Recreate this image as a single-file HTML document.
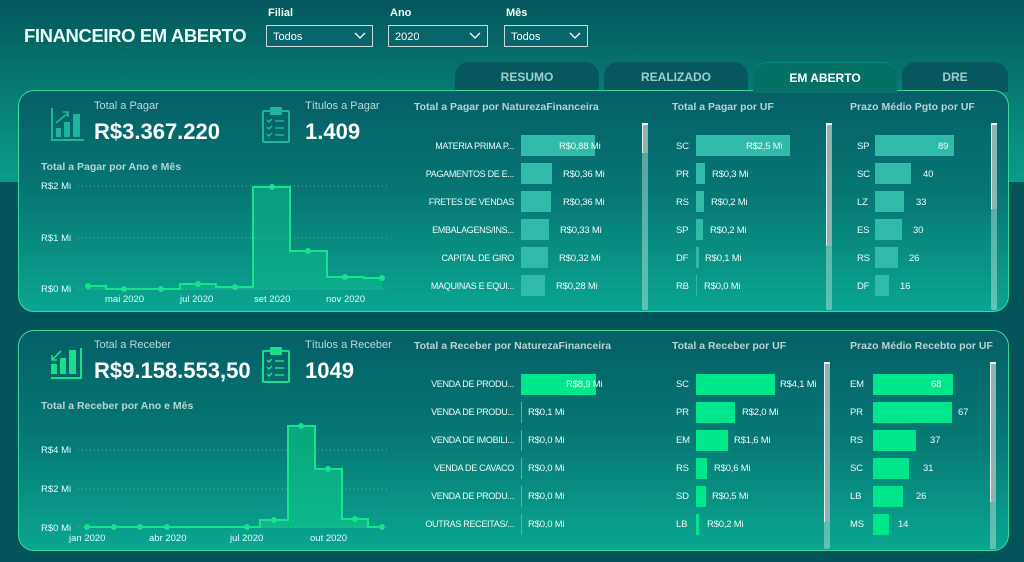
<!DOCTYPE html>
<html><head><meta charset="utf-8"><style>
*{margin:0;padding:0;box-sizing:border-box}
body{width:1024px;height:562px;overflow:hidden;position:relative;font-family:"Liberation Sans",sans-serif;background:#03555b;color:#fff}
.top{position:absolute;left:0;top:0;width:1024px;height:182px;background:linear-gradient(180deg,#04565c 0%,#078073 55%,#0a9c88 100%)}
.a{position:absolute;white-space:nowrap}
.title{left:24px;top:25px;font-size:18.5px;font-weight:bold;color:#e8fff8;letter-spacing:-0.4px}
.fl{font-size:11px;font-weight:bold;color:#f0fff8;top:7px}
.sel{top:25px;height:22px;border:1px solid #c8d8d8;background:#08656a;font-size:11px;padding:5px 6px;color:#fff}
.sel svg{position:absolute;right:6px;top:6px}
.tab{top:62px;height:30px;border-radius:14px 14px 0 0;background:#06575e;font-size:12px;font-weight:bold;color:#9ccfc8;text-align:center;padding-top:8px}
.tab.on{background:#057064;color:#fff;border-top:1px solid #0a8a7a}
.panel{position:absolute;left:18px;width:991px;border:1.5px solid #3fd69e;border-radius:16px;background:linear-gradient(180deg,#055e66 0%,#067a75 50%,#0aa790 100%)}
.lbl{font-size:11px;color:#b9d9d4}
.big{font-size:22px;font-weight:bold;color:#fff}
.ct{font-size:10.5px;font-weight:bold;color:#b5d5cf}
.rl{font-size:9px;color:#eefaf6;text-align:right;letter-spacing:-0.3px}
.v{font-size:9.5px;color:#eefaf6;letter-spacing:-0.2px}
.bar{position:absolute;height:21px}
.b1{background:#2fbba8}
.b2{background:#00e68c}
.sb{position:absolute;width:6px;background:rgba(200,230,225,.45);border-radius:1px}
.sb i{position:absolute;left:0;top:0;width:6px;background:#8fb3b0;border-top:2px solid #eee;border-left:1px solid #eee}
</style></head><body>
<div class="top"></div>
<div class="a title">FINANCEIRO EM ABERTO</div>
<div class="a fl" style="left:268px">Filial</div>
<div class="a fl" style="left:390px">Ano</div>
<div class="a fl" style="left:506px">Mês</div>
<div class="a sel" style="left:266px;width:107px">Todos<svg width="12" height="8"><path d="M1 1l5 5 5-5" stroke="#fff" fill="none" stroke-width="1.3"/></svg></div>
<div class="a sel" style="left:388px;width:100px">2020<svg width="12" height="8"><path d="M1 1l5 5 5-5" stroke="#fff" fill="none" stroke-width="1.3"/></svg></div>
<div class="a sel" style="left:504px;width:84px">Todos<svg width="12" height="8"><path d="M1 1l5 5 5-5" stroke="#fff" fill="none" stroke-width="1.3"/></svg></div>

<div class="a tab" style="left:455px;width:144px">RESUMO</div>
<div class="a tab" style="left:604px;width:144px">REALIZADO</div>
<div class="a tab" style="left:902px;width:106px">DRE</div>

<!-- Panel 1 -->
<div class="panel" style="top:90px;height:222px"></div>
<div class="a tab on" style="left:753px;width:144px;top:62px;height:31px">EM ABERTO</div>
<svg class="a" style="left:50px;top:106px" width="36" height="36"><g fill="#1fb59a" stroke="#1fb59a"><path d="M2 2v32h32" fill="none" stroke-width="2"/><rect x="6" y="22" width="5" height="9" stroke="none"/><rect x="14" y="16" width="6" height="15" stroke="none"/><rect x="23" y="8" width="7" height="23" stroke="none"/><path d="M6 17l12-10M13 6h5v5" fill="none" stroke-width="1.6"/></g></svg>
<div class="a lbl" style="left:94px;top:100px">Total a Pagar</div>
<div class="a big" style="left:94px;top:119px">R$3.367.220</div>
<svg class="a" style="left:261px;top:106px" width="30" height="38"><g stroke="#1fb59a" fill="none" stroke-width="2"><rect x="2" y="5" width="26" height="31" rx="1"/><rect x="10" y="2" width="10" height="6" fill="#1fb59a"/><path d="M6 14l2 2 3-3M6 21l2 2 3-3M6 28l2 2 3-3M14 15h9M14 22h9M14 29h9" stroke-width="1.5"/></g></svg>
<div class="a lbl" style="left:305px;top:100px">Títulos a Pagar</div>
<div class="a big" style="left:305px;top:119px">1.409</div>
<div class="a ct" style="left:41px;top:161px">Total a Pagar por Ano e Mês</div>
<svg class="a" style="left:0;top:0" width="400" height="310">
<g font-family="Liberation Sans" font-size="9.5" fill="#dff">
<text x="41" y="189">R$2 Mi</text><text x="41" y="241">R$1 Mi</text><text x="41" y="292">R$0 Mi</text>
<text x="105" y="302">mai 2020</text><text x="180" y="302">jul 2020</text><text x="254" y="302">set 2020</text><text x="326" y="302">nov 2020</text></g>
<g stroke="#7fb8b0" stroke-dasharray="1 3" stroke-width="0.8"><path d="M78 186H390M78 238H390M78 289H390"/></g>
<path d="M88 286H106V289H143V289H180V284H216V287H253V187H290V251H327V277H364V278H382V290H88Z" fill="#0fb98a" opacity=".55"/>
<path d="M88 286H106V289H143V289H180V284H216V287H253V187H290V251H327V277H364V278H382" fill="none" stroke="#16e38c" stroke-width="2"/>
<g fill="#16e38c"><circle cx="88" cy="286" r="3"/><circle cx="124" cy="289" r="3"/><circle cx="161" cy="289" r="3"/><circle cx="198" cy="284" r="3"/><circle cx="235" cy="287" r="3"/><circle cx="272" cy="187" r="3"/><circle cx="308" cy="251" r="3"/><circle cx="345" cy="277" r="3"/><circle cx="382" cy="278" r="3"/></g>
</svg>

<div class="a ct" style="left:414px;top:101px">Total a Pagar por NaturezaFinanceira</div>
<div class="a ct" style="left:672px;top:101px">Total a Pagar por UF</div>
<div class="a ct" style="left:850px;top:101px">Prazo Médio Pgto por UF</div>

<div class="a rl" style="left:400px;width:114px;top:141px">MATERIA PRIMA P...</div>
<div class="a rl" style="left:400px;width:114px;top:169px">PAGAMENTOS DE E...</div>
<div class="a rl" style="left:400px;width:114px;top:197px">FRETES DE VENDAS</div>
<div class="a rl" style="left:400px;width:114px;top:225px">EMBALAGENS/INS...</div>
<div class="a rl" style="left:400px;width:114px;top:253px">CAPITAL DE GIRO</div>
<div class="a rl" style="left:400px;width:114px;top:281px">MAQUINAS E EQUI...</div>
<div class="bar b1" style="left:521px;top:135px;width:74px"></div><div class="a v" style="left:559px;top:141px">R$0,88 Mi</div>
<div class="bar b1" style="left:521px;top:163px;width:31px"></div><div class="a v" style="left:563px;top:169px">R$0,36 Mi</div>
<div class="bar b1" style="left:521px;top:191px;width:30px"></div><div class="a v" style="left:563px;top:197px">R$0,36 Mi</div>
<div class="bar b1" style="left:521px;top:219px;width:28px"></div><div class="a v" style="left:560px;top:225px">R$0,33 Mi</div>
<div class="bar b1" style="left:521px;top:247px;width:27px"></div><div class="a v" style="left:559px;top:253px">R$0,32 Mi</div>
<div class="bar b1" style="left:521px;top:275px;width:24px"></div><div class="a v" style="left:556px;top:281px">R$0,28 Mi</div>
<div class="sb" style="left:642px;top:123px;height:187px"><i style="height:30px"></i></div>

<div class="a v" style="left:676px;top:141px">SC</div><div class="bar b1" style="left:696px;top:135px;width:94px"></div><div class="a v" style="left:746px;top:141px">R$2,5 Mi</div>
<div class="a v" style="left:676px;top:169px">PR</div><div class="bar b1" style="left:696px;top:163px;width:9px"></div><div class="a v" style="left:712px;top:169px">R$0,3 Mi</div>
<div class="a v" style="left:676px;top:197px">RS</div><div class="bar b1" style="left:696px;top:191px;width:8px"></div><div class="a v" style="left:711px;top:197px">R$0,2 Mi</div>
<div class="a v" style="left:676px;top:225px">SP</div><div class="bar b1" style="left:696px;top:219px;width:7px"></div><div class="a v" style="left:710px;top:225px">R$0,2 Mi</div>
<div class="a v" style="left:676px;top:253px">DF</div><div class="bar b1" style="left:696px;top:247px;width:3px"></div><div class="a v" style="left:705px;top:253px">R$0,1 Mi</div>
<div class="a v" style="left:676px;top:281px">RB</div><div class="bar b1" style="left:696px;top:275px;width:1px"></div><div class="a v" style="left:704px;top:281px">R$0,0 Mi</div>
<div class="sb" style="left:826px;top:123px;height:187px"><i style="height:123px"></i></div>

<div class="a v" style="left:857px;top:141px">SP</div><div class="bar b1" style="left:875px;top:135px;width:79px"></div><div class="a v" style="left:938px;top:141px">89</div>
<div class="a v" style="left:857px;top:169px">SC</div><div class="bar b1" style="left:875px;top:163px;width:36px"></div><div class="a v" style="left:923px;top:169px">40</div>
<div class="a v" style="left:857px;top:197px">LZ</div><div class="bar b1" style="left:875px;top:191px;width:29px"></div><div class="a v" style="left:916px;top:197px">33</div>
<div class="a v" style="left:857px;top:225px">ES</div><div class="bar b1" style="left:875px;top:219px;width:27px"></div><div class="a v" style="left:913px;top:225px">30</div>
<div class="a v" style="left:857px;top:253px">RS</div><div class="bar b1" style="left:875px;top:247px;width:23px"></div><div class="a v" style="left:909px;top:253px">26</div>
<div class="a v" style="left:857px;top:281px">DF</div><div class="bar b1" style="left:875px;top:275px;width:14px"></div><div class="a v" style="left:900px;top:281px">16</div>
<div class="sb" style="left:991px;top:123px;height:187px"><i style="height:86px"></i></div>

<!-- Panel 2 -->
<div class="panel" style="top:330px;height:221px"></div>
<svg class="a" style="left:49px;top:346px" width="34" height="34"><g fill="#18e08a" stroke="#18e08a"><path d="M32 2v30H2" fill="none" stroke-width="2"/><rect x="2" y="18" width="6" height="10" stroke="none"/><rect x="11" y="12" width="6" height="16" stroke="none"/><rect x="20" y="4" width="7" height="24" stroke="none"/><path d="M12 5L3 14M3 9v5h5" fill="none" stroke-width="1.6"/></g></svg>
<div class="a lbl" style="left:94px;top:339px">Total a Receber</div>
<div class="a big" style="left:94px;top:358px">R$9.158.553,50</div>
<svg class="a" style="left:261px;top:346px" width="30" height="38"><g stroke="#18e08a" fill="none" stroke-width="2"><rect x="2" y="5" width="26" height="31" rx="1"/><rect x="10" y="2" width="10" height="6" fill="#18e08a"/><path d="M6 14l2 2 3-3M6 21l2 2 3-3M6 28l2 2 3-3M14 15h9M14 22h9M14 29h9" stroke-width="1.5"/></g></svg>
<div class="a lbl" style="left:305px;top:339px">Títulos a Receber</div>
<div class="a big" style="left:305px;top:358px">1049</div>
<div class="a ct" style="left:41px;top:400px">Total a Receber por Ano e Mês</div>
<svg class="a" style="left:0;top:0" width="400" height="562">
<g font-family="Liberation Sans" font-size="9.5" fill="#dff">
<text x="41" y="453">R$4 Mi</text><text x="41" y="492">R$2 Mi</text><text x="41" y="531">R$0 Mi</text>
<text x="69" y="541">jan 2020</text><text x="149" y="541">abr 2020</text><text x="230" y="541">jul 2020</text><text x="310" y="541">out 2020</text></g>
<g stroke="#7fb8b0" stroke-dasharray="1 3" stroke-width="0.8"><path d="M78 450H390M78 489H390M78 527H390"/></g>
<path d="M87 527H260V520H288V426H315V469H342V519H368V527H382V528H87Z" fill="#0fcf8a" opacity=".55"/>
<path d="M87 527H260V520H288V426H315V469H342V519H368V527H382" fill="none" stroke="#16e38c" stroke-width="2"/>
<g fill="#16e38c"><circle cx="87" cy="527" r="3"/><circle cx="114" cy="527" r="3"/><circle cx="140" cy="527" r="3"/><circle cx="167" cy="527" r="3"/><circle cx="247" cy="527" r="3"/><circle cx="274" cy="520" r="3"/><circle cx="301" cy="426" r="3"/><circle cx="328" cy="469" r="3"/><circle cx="355" cy="519" r="3"/><circle cx="382" cy="527" r="3"/></g>
</svg>

<div class="a ct" style="left:414px;top:340px">Total a Receber por NaturezaFinanceira</div>
<div class="a ct" style="left:672px;top:340px">Total a Receber por UF</div>
<div class="a ct" style="left:850px;top:340px">Prazo Médio Recebto por UF</div>

<div class="a rl" style="left:400px;width:114px;top:379px">VENDA DE PRODU...</div>
<div class="a rl" style="left:400px;width:114px;top:407px">VENDA DE PRODU...</div>
<div class="a rl" style="left:400px;width:114px;top:435px">VENDA DE IMOBILI...</div>
<div class="a rl" style="left:400px;width:114px;top:463px">VENDA DE CAVACO</div>
<div class="a rl" style="left:400px;width:114px;top:491px">VENDA DE PRODU...</div>
<div class="a rl" style="left:400px;width:114px;top:519px">OUTRAS RECEITAS/...</div>
<div class="bar b2" style="left:521px;top:374px;width:75px"></div><div class="a v" style="left:566px;top:379px">R$8,9 Mi</div>
<div class="bar b2" style="left:521px;top:402px;width:1px"></div><div class="a v" style="left:528px;top:407px">R$0,1 Mi</div>
<div class="bar b2" style="left:521px;top:430px;width:1px"></div><div class="a v" style="left:528px;top:435px">R$0,0 Mi</div>
<div class="bar b2" style="left:521px;top:458px;width:1px"></div><div class="a v" style="left:528px;top:463px">R$0,0 Mi</div>
<div class="bar b2" style="left:521px;top:486px;width:1px"></div><div class="a v" style="left:528px;top:491px">R$0,0 Mi</div>
<div class="bar b2" style="left:521px;top:514px;width:1px"></div><div class="a v" style="left:528px;top:519px">R$0,0 Mi</div>

<div class="a v" style="left:676px;top:379px">SC</div><div class="bar b2" style="left:696px;top:374px;width:79px"></div><div class="a v" style="left:780px;top:379px">R$4,1 Mi</div>
<div class="a v" style="left:676px;top:407px">PR</div><div class="bar b2" style="left:696px;top:402px;width:39px"></div><div class="a v" style="left:742px;top:407px">R$2,0 Mi</div>
<div class="a v" style="left:676px;top:435px">EM</div><div class="bar b2" style="left:696px;top:430px;width:32px"></div><div class="a v" style="left:734px;top:435px">R$1,6 Mi</div>
<div class="a v" style="left:676px;top:463px">RS</div><div class="bar b2" style="left:696px;top:458px;width:11px"></div><div class="a v" style="left:714px;top:463px">R$0,6 Mi</div>
<div class="a v" style="left:676px;top:491px">SD</div><div class="bar b2" style="left:696px;top:486px;width:10px"></div><div class="a v" style="left:712px;top:491px">R$0,5 Mi</div>
<div class="a v" style="left:676px;top:519px">LB</div><div class="bar b2" style="left:696px;top:514px;width:3px"></div><div class="a v" style="left:707px;top:519px">R$0,2 Mi</div>
<div class="sb" style="left:824px;top:362px;height:187px"><i style="height:160px"></i></div>

<div class="a v" style="left:850px;top:379px">EM</div><div class="bar b2" style="left:873px;top:374px;width:80px"></div><div class="a v" style="left:931px;top:379px">68</div>
<div class="a v" style="left:850px;top:407px">PR</div><div class="bar b2" style="left:873px;top:402px;width:79px"></div><div class="a v" style="left:958px;top:407px">67</div>
<div class="a v" style="left:850px;top:435px">RS</div><div class="bar b2" style="left:873px;top:430px;width:43px"></div><div class="a v" style="left:930px;top:435px">37</div>
<div class="a v" style="left:850px;top:463px">SC</div><div class="bar b2" style="left:873px;top:458px;width:36px"></div><div class="a v" style="left:923px;top:463px">31</div>
<div class="a v" style="left:850px;top:491px">LB</div><div class="bar b2" style="left:873px;top:486px;width:30px"></div><div class="a v" style="left:916px;top:491px">26</div>
<div class="a v" style="left:850px;top:519px">MS</div><div class="bar b2" style="left:873px;top:514px;width:16px"></div><div class="a v" style="left:898px;top:519px">14</div>
<div class="sb" style="left:990px;top:362px;height:187px"><i style="height:140px"></i></div>
</body></html>
